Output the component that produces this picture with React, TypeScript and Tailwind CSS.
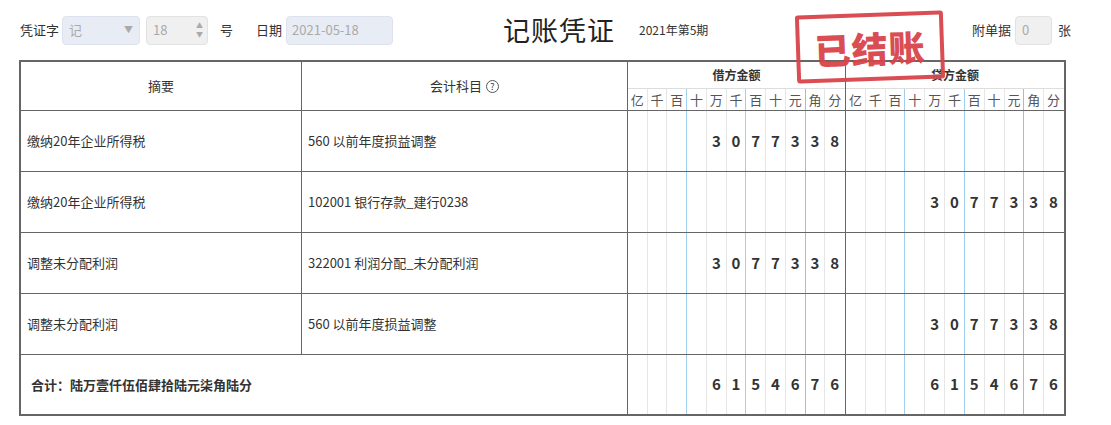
import React from "react";

const units = ["亿","千","百","十","万","千","百","十","元","角","分"];
const sepColor = (i: number) =>
  i === 2 || i === 5 ? "border-[#9fd0ee]" : i === 8 ? "border-[#f0a0a4]" : i === 10 ? "border-transparent" : "border-[#e6e6e6]";

function Digits({ value, header }: { value?: string; header?: boolean }) {
  const cells: string[] = Array(11).fill("");
  if (value) {
    const s = value.split("");
    for (let k = 0; k < s.length; k++) cells[11 - s.length + k] = s[k];
  }
  return (
    <div className="flex h-full">
      {cells.map((c, i) => (
        <div
          key={i}
          className={`flex-1 border-r ${sepColor(i)} flex items-center justify-center ${header ? "text-[13px] text-[#555]" : "text-[15px] font-bold text-[#333]"}`}
        >
          {header ? units[i] : c}
        </div>
      ))}
    </div>
  );
}

const rows = [
  { s: "缴纳20年企业所得税", a: "560 以前年度损益调整", d: "3077338", c: "" },
  { s: "缴纳20年企业所得税", a: "102001 银行存款_建行0238", d: "", c: "3077338" },
  { s: "调整未分配利润", a: "322001 利润分配_未分配利润", d: "3077338", c: "" },
  { s: "调整未分配利润", a: "560 以前年度损益调整", d: "", c: "3077338" },
];

export default function App() {
  return (
    <div className="relative w-[1111px] h-[425px] bg-white text-[#333]" style={{ fontFamily: '"Noto Sans CJK SC", "Liberation Sans", sans-serif' }}>
      <div className="flex items-center h-[60px] pl-[20px] pr-[40px] text-[13px]">
        <span>凭证字</span>
        <div className="ml-[3px] w-[78px] h-[29px] bg-[#e8ecf5] border border-[#dde2ee] rounded-sm flex items-center justify-between px-[6px] text-[#aaa]">
          <span>记</span><span className="text-[9px]">▼</span>
        </div>
        <div className="ml-[6px] w-[62px] h-[29px] bg-[#f0f0f0] border border-[#e2e2e2] rounded-sm flex items-center justify-between pl-[6px] pr-[4px] text-[#aaa]">
          <span>18</span>
          <span className="flex flex-col text-[7px] leading-[9px]"><span>▲</span><span>▼</span></span>
        </div>
        <span className="ml-[12px]">号</span>
        <span className="ml-[23px]">日期</span>
        <div className="ml-[4px] w-[107px] h-[29px] bg-[#e8ecf5] border border-[#dde2ee] rounded-sm flex items-center px-[5px] text-[#aaa]">2021-05-18</div>
        <span className="ml-[110px] text-[27px] text-[#222] tracking-[1px]">记账凭证</span>
        <span className="ml-[24px] text-[12px]">2021年第5期</span>
        <span className="ml-auto">附单据</span>
        <div className="ml-[4px] w-[37px] h-[29px] bg-[#f0f0f0] border border-[#e2e2e2] rounded-sm flex items-center px-[6px] text-[#aaa]">0</div>
        <span className="ml-[6px]">张</span>
      </div>

      <div className="mx-[19px] w-[1047px] border-2 border-[#666] text-[13px]">
        <div className="grid grid-cols-[281px_326px_1fr_1fr] h-[49px] border-b border-[#666]">
          <div className="border-r border-[#666] flex items-center justify-center">摘要</div>
          <div className="border-r border-[#666] flex items-center justify-center gap-1">
            会计科目
            <span className="w-[13px] h-[13px] rounded-full border border-[#555] text-[9px] flex items-center justify-center leading-none">?</span>
          </div>
          <div className="border-r border-[#666] flex flex-col">
            <div className="h-[27px] flex items-center justify-center font-bold text-[12px] border-b border-[#ddd]">借方金额</div>
            <div className="flex-1"><Digits header /></div>
          </div>
          <div className="flex flex-col">
            <div className="h-[27px] flex items-center justify-center font-bold text-[12px] border-b border-[#ddd]">贷方金额</div>
            <div className="flex-1"><Digits header /></div>
          </div>
        </div>
        {rows.map((r, i) => (
          <div key={i} className="grid grid-cols-[281px_326px_1fr_1fr] h-[61px] border-b border-[#666]">
            <div className="border-r border-[#666] flex items-center pl-[6px]">{r.s}</div>
            <div className="border-r border-[#666] flex items-center pl-[6px]">{r.a}</div>
            <div className="border-r border-[#666]"><Digits value={r.d} /></div>
            <div><Digits value={r.c} /></div>
          </div>
        ))}
        <div className="grid grid-cols-[607px_1fr_1fr] h-[59px]">
          <div className="border-r border-[#666] flex items-center pl-[10px] font-bold">合计：陆万壹仟伍佰肆拾陆元柒角陆分</div>
          <div className="border-r border-[#666]"><Digits value="6154676" /></div>
          <div><Digits value="6154676" /></div>
        </div>
      </div>

      <div className="absolute left-[796px] top-[13px] w-[148px] h-[68px] border-[4px] border-[#d9444a] rounded-[3px] rotate-[-2deg] flex items-center justify-center opacity-95">
        <span className="text-[36px] font-black text-[#d9444a] tracking-[1px] leading-none">已结账</span>
      </div>
    </div>
  );
}
